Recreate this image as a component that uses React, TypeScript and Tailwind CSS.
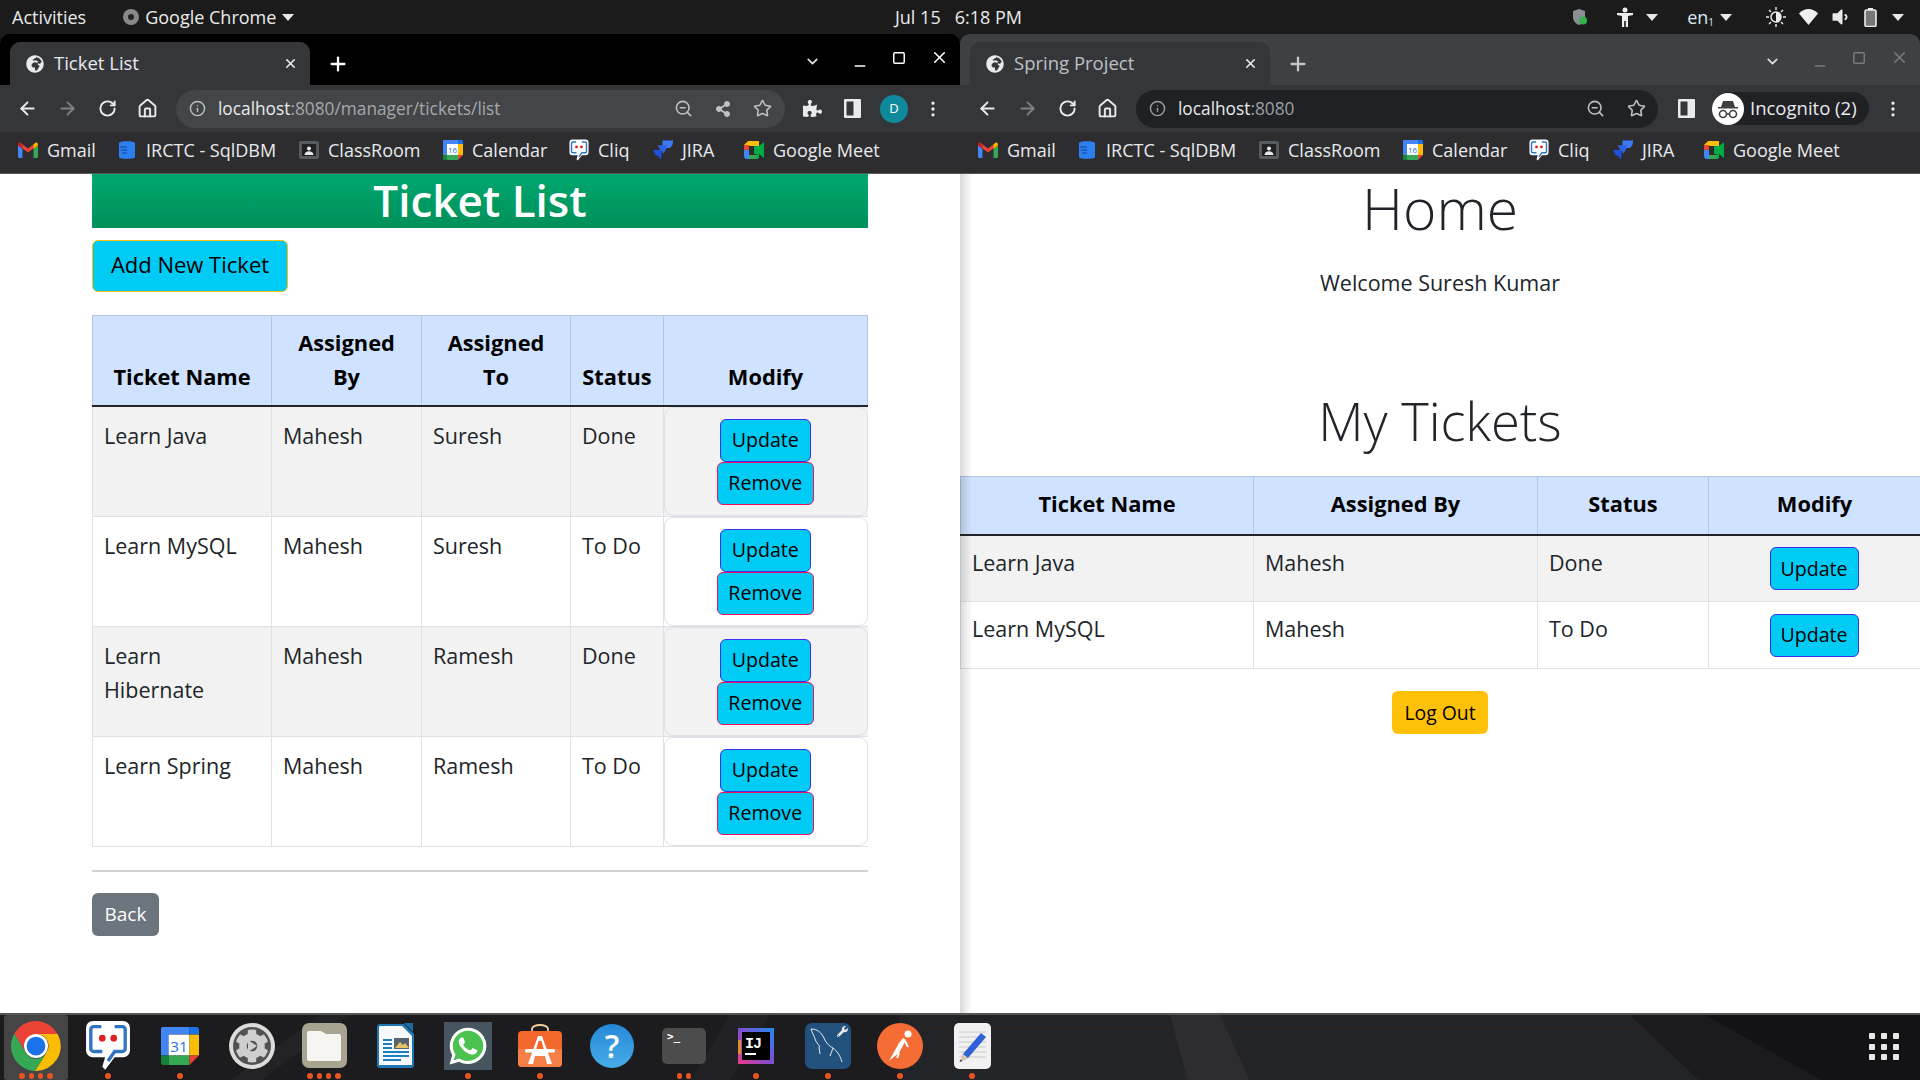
import React from "react";
import { ArrowLeft, ArrowRight, RotateCw, Home, Info, ZoomOut, Star, X, Plus, ChevronDown, Minus, Square, EllipsisVertical } from "lucide-react";
import { FaGlobeAfrica, FaWhatsapp, FaPuzzlePiece, FaShareAlt, FaCog, FaWrench, FaVolumeDown } from "react-icons/fa";

const FONT = "font-['Open_Sans','Noto_Sans',sans-serif]";

const Caret = ({ className = "" }: { className?: string }) => (
  <svg width="12" height="7" viewBox="0 0 12 7" className={className}><path d="M0 0h12L6 7z" fill="#e8e8e8" /></svg>
);

const Gmail = () => (
  <svg width="20" height="16" viewBox="0 0 20 16">
    <path d="M0 3v11.5A1.5 1.5 0 0 0 1.500 16H4.500V7z" fill="#4285f4" />
    <path d="M15.500 7v9h3a1.500 1.500 0 0 0 1.500-1.500V3z" fill="#34a853" />
    <path d="M0 3 10 10.500 20 3 18 0.500 10 6.500 2 0.500z" fill="#ea4335" />
    <path d="M0 3c0-2 1.500-3 2-2.500L4.500 2.500V7zM20 3c0-2-1.500-3-2-2.500L15.500 2.500V7z" fill="#c5221f" />
    <path d="M15.500 2.500 18 0.500C19 0.500 20 1.500 20 3L15.500 7z" fill="#fbbc04" />
  </svg>
);
const Irctc = () => (
  <svg width="18" height="20" viewBox="0 0 18 20">
    <path d="M1 3C1 .5 17 .5 17 3v14c0 2.500-16 2.500-16 0z" fill="#2b7ff0" />
    <path d="M2 7h7M3 10h6M4 13h5" stroke="#12479c" strokeWidth="1.200" />
  </svg>
);
const ClassRoom = () => (
  <svg width="20" height="18" viewBox="0 0 20 18">
    <rect width="20" height="18" rx="2" fill="#565a61" />
    <rect x="3" y="3" width="14" height="12" fill="#202124" />
    <circle cx="10" cy="7.500" r="2" fill="#e8e8e8" />
    <path d="M5.500 14c0-5 9-5 9 0z" fill="#e8e8e8" />
  </svg>
);
const CalendarIcon = ({ size = 20, text = "16" }: { size?: number; text?: string }) => (
  <svg width={size} height={size} viewBox="0 0 20 20">
    <path d="M1 0h14v4H4v11H0V1a1 1 0 0 1 1-1z" fill="#4285f4" />
    <rect x="4" y="4" width="11" height="11" fill="#fff" />
    <path d="M15 0h3.500A1.500 1.500 0 0 1 20 1.500V4h-5z" fill="#1a73e8" />
    <path d="M15 4h5v11h-5z" fill="#fbbc04" />
    <path d="M0 15h4v5H1a1 1 0 0 1-1-1z" fill="#188038" />
    <path d="M4 15h11v5H4z" fill="#34a853" />
    <path d="M15 15h5l-5 5z" fill="#ea4335" />
    <text x="9.500" y="13" textAnchor="middle" fontSize="8" fontFamily="Open Sans" fill="#1a73e8">{text}</text>
  </svg>
);
const Cliq = ({ size = 20 }: { size?: number }) => (
  <svg width={size} height={size * 1.1} viewBox="0 0 48 53">
    <path d="M8 1h32a7 7 0 0 1 7 7v24a7 7 0 0 1-7 7H31L21 52l-3-3 3-10H8a7 7 0 0 1-7-7V8a7 7 0 0 1 7-7z" fill="#fff" />
    <path d="M17 7H9a3 3 0 0 0-3 3v20a3 3 0 0 0 3 3h9M31 7h8a3 3 0 0 1 3 3v20a3 3 0 0 1-3 3h-8l-7 10" fill="none" stroke="#2f74c0" strokeWidth="3.500" />
    <circle cx="18" cy="19" r="3.500" fill="#e02020" />
    <circle cx="30" cy="19" r="3.500" fill="#e02020" />
  </svg>
);
const Jira = () => (
  <svg width="21" height="21" viewBox="0 0 21 21">
    <path d="M10 0h11v1c0 4-2 7-5 7h-2L10 12z" fill="#3d7bf5" />
    <path d="M5 5h9v4l-3 5-2-3H8z" fill="#2c62e8" />
    <path d="M0 10h9v4c0 1 0 3 0 3l-1 3-3-4H3z" fill="#1f50d8" />
  </svg>
);
const Meet = () => (
  <svg width="20" height="18" viewBox="0 0 20 18">
    <path d="M4 0h9v5H5v4H0V4z" fill="#fbbc04" />
    <path d="M0 9h5v5h8v4H3a3 3 0 0 1-3-3z" fill="#4285f4" />
    <path d="M0 4h5v5H0z" fill="#ea4335" />
    <path d="M5 14h8v4H5z" fill="#34a853" />
    <path d="M13 0a2 2 0 0 1 2 2v3l5-4v16l-5-4v3a2 2 0 0 1-2 2zM13 5h-3v8h3z" fill="#00ac47" />
    <path d="M13 0h2v5h-2z" fill="#fbbc04" />
  </svg>
);

const bookmarks: [React.ReactNode, string, string][] = [
  [<Gmail key="g" />, "Gmail", "w-[99px]"],
  [<Irctc key="i" />, "IRCTC - SqlDBM", "w-[182px]"],
  [<ClassRoom key="c" />, "ClassRoom", "w-[144px]"],
  [<CalendarIcon key="d" />, "Calendar", "w-[126px]"],
  [<Cliq key="q" />, "Cliq", "w-[84px]"],
  [<Jira key="j" />, "JIRA", "w-[91px]"],
  [<Meet key="m" />, "Google Meet", "w-[140px]"],
];

const Bookmarks = () => (
  <div className="flex h-[41px] items-center bg-[#2d2d2f] pl-[18px] pb-[5px]">
    {bookmarks.map(([icon, label, w]) => (
      <div key={label} className={`flex items-center gap-[9px] ${w}`}>
        <span className="flex w-[20px] justify-center">{icon}</span>
        <span className="text-[18px] whitespace-nowrap text-[#e8eaed]">{label}</span>
      </div>
    ))}
  </div>
);

const Tab = ({ title, active }: { title: string; active: boolean }) => (
  <div className={`flex h-[51px] items-end pl-[10px] ${active ? "bg-black" : "bg-[#3d4144]"} rounded-t-[10px]`}>
    <div className="flex h-[43px] w-[300px] items-center rounded-t-[10px] bg-[#35363a] pl-[16px] pr-[12px]">
      <FaGlobeAfrica size={18} color="#e8eaed" />
      <span className={`ml-[10px] flex-1 pb-[1px] text-[18.500px] ${active ? "text-[#e8eaed]" : "text-[#bdc1c6]"}`}>{title}</span>
      <X size={15} color="#e8eaed" strokeWidth={2.500} />
    </div>
    <div className="flex h-[43px] w-[56px] items-center justify-center">
      <Plus size={22} color={active ? "#fff" : "#c4c7c9"} strokeWidth={2.500} />
    </div>
    <div className="flex-1" />
    <div className={`flex h-[43px] items-center pb-1 pr-[11px] ${active ? "text-white" : "text-[#777b7e]"}`}>
      <ChevronDown size={17} className="mr-[31px] text-[#dadce0]" strokeWidth={2.500} />
      <Minus size={16} className="mr-[24px] mt-2" strokeWidth={2.500} />
      <Square size={14} className="mr-[24px] -mt-2" strokeWidth={2.500} />
      <X size={19} className="-mt-2" strokeWidth={2} />
    </div>
  </div>
);

const NavIcons = () => (
  <div className="flex w-[176px] shrink-0 items-center pl-[17px] text-[#e8eaed]">
    <ArrowLeft size={21} strokeWidth={2.200} />
    <ArrowRight size={21} strokeWidth={2.200} className="ml-[19px] text-[#7f8184]" />
    <RotateCw size={19} strokeWidth={2.400} className="ml-[20px]" />
    <Home size={21} strokeWidth={2.200} className="ml-[20px]" />
  </div>
);

const SidePanel = () => (
  <svg width="17" height="19" viewBox="0 0 17 19"><rect width="17" height="19" rx="1" fill="#e8eaed" /><rect x="2.500" y="2.500" width="7" height="14" fill="#35363a" /></svg>
);

const LeftToolbar = () => (
  <div className="flex h-[47px] items-center bg-[#35363a]">
    <NavIcons />
    <div className="flex h-[38px] w-[609px] items-center rounded-full bg-[#434548] pl-[13px] pr-[13px]">
      <Info size={17} color="#bdc1c6" />
      <span className="ml-[12px] flex-1 text-[17.300px] text-[#e8eaed]">localhost<span className="text-[#a5a8ac]">:8080/manager/tickets/list</span></span>
      <ZoomOut size={19} color="#bdc1c6" />
      <FaShareAlt size={16} color="#bdc1c6" className="ml-[22px]" />
      <Star size={19} color="#bdc1c6" className="ml-[22px]" />
    </div>
    <FaPuzzlePiece size={19} color="#e8eaed" className="ml-[18px]" />
    <span className="ml-[22px]"><SidePanel /></span>
    <div className="ml-[19px] flex h-[28px] w-[28px] items-center justify-center rounded-full bg-[#0e8a9c] text-[13px] text-white">D</div>
    <EllipsisVertical size={20} color="#e8eaed" className="ml-[15px]" />
  </div>
);

const RightToolbar = () => (
  <div className="flex h-[47px] items-center bg-[#35363a]">
    <NavIcons />
    <div className="flex h-[38px] w-[522px] items-center rounded-full bg-[#202124] pl-[13px] pr-[12px]">
      <Info size={17} color="#9aa0a6" />
      <span className="ml-[12px] flex-1 text-[17.300px] text-[#e8eaed]">localhost<span className="text-[#9aa0a6]">:8080</span></span>
      <ZoomOut size={19} color="#bdc1c6" />
      <Star size={19} color="#bdc1c6" className="ml-[22px]" />
    </div>
    <span className="ml-[20px]"><SidePanel /></span>
    <div className="ml-[17px] flex h-[33px] w-[157px] items-center rounded-full bg-[#202124]">
      <svg width="32" height="32" viewBox="0 0 32 32">
        <circle cx="16" cy="16" r="16" fill="#fff" />
        <path d="M11 8h10l2 6h3v1.500H6V14h3z" fill="#3c4043" />
        <circle cx="11" cy="21" r="3.500" fill="none" stroke="#3c4043" strokeWidth="1.600" />
        <circle cx="21" cy="21" r="3.500" fill="none" stroke="#3c4043" strokeWidth="1.600" />
        <path d="M14.500 21h3" stroke="#3c4043" strokeWidth="1.600" />
      </svg>
      <span className="ml-[6px] pb-[1px] text-[18.500px] text-[#e8eaed]">Incognito (2)</span>
    </div>
    <EllipsisVertical size={20} color="#e8eaed" className="ml-[14px]" />
  </div>
);

const BTN = "flex items-center justify-center rounded-[6px] bg-[#00cbf5] text-black border-[1.5px]";

const UpdateBtn = ({ w = "w-[91px]" }: { w?: string }) => (
  <div className={`${BTN} h-[43px] ${w} border-[#3b30f0] text-[19.600px]`}>Update</div>
);

const leftRows = [
  ["Learn Java", "Mahesh", "Suresh", "Done"],
  ["Learn MySQL", "Mahesh", "Suresh", "To Do"],
  ["Learn Hibernate", "Mahesh", "Ramesh", "Done"],
  ["Learn Spring", "Mahesh", "Ramesh", "To Do"],
];

const TH = "border border-b-0 border-[#b6c6e0] bg-[#cfe2ff] px-[11px] pt-[10px] pb-[12px] text-center align-bottom text-[21.800px] font-bold text-black leading-[33.600px]";
const TD = "border border-[#dee2e6] px-[11px] pt-[12px] pb-[6px] align-top text-[#212529] leading-[33.600px]";

const LeftPage = () => (
  <div className="h-[840px] bg-white px-[92px] text-[21.500px]">
    <div className="flex h-[54px] items-center justify-center bg-gradient-to-b from-[#00a76f] to-[#00905a] pb-[2px] text-[44px] font-semibold text-white leading-none">Ticket List</div>
    <div className={`${BTN} mt-[12px] h-[52px] w-[196px] border-[#ffc107] pb-[3px] text-[22px]`}>Add New Ticket</div>
    <table className="mt-[23px] w-[775px] table-fixed border-collapse">
      <colgroup>
        <col className="w-[179px]" /><col className="w-[150px]" /><col className="w-[149px]" /><col className="w-[93px]" /><col className="w-[204px]" />
      </colgroup>
      <thead>
        <tr className="border-b-[2.500px] border-b-[#212529]">
          <th className={TH}>Ticket Name</th>
          <th className={TH}>Assigned By</th>
          <th className={TH}>Assigned To</th>
          <th className={TH}>Status</th>
          <th className={TH}>Modify</th>
        </tr>
      </thead>
      <tbody>
        {leftRows.map((r, i) => (
          <tr key={r[0]} className={i % 2 === 0 ? "bg-[#f2f2f2]" : "bg-white"}>
            {r.map((c) => <td key={c} className={`${TD} h-[109px]`}>{c}</td>)}
            <td className="h-[109px] border-b border-[#dee2e6] p-0">
              <div className={`flex h-[109px] flex-col items-center justify-center rounded-[9px] border border-[#dee2e6] pr-[1px] ${i % 2 === 0 ? "bg-[#f2f2f2]" : "bg-white"}`}>
                <UpdateBtn />
                <div className={`${BTN} h-[43px] w-[97px] border-[#f0105f] text-[19.600px]`}>Remove</div>
              </div>
            </td>
          </tr>
        ))}
      </tbody>
    </table>
    <div className="mt-[23px] h-[2px] bg-[#d0d2d4]" />
    <div className="mt-[21px] flex h-[43px] w-[67px] items-center justify-center rounded-[6px] bg-[#6c757d] text-[19px] text-white">Back</div>
  </div>
);

const rightRows = [["Learn Java", "Mahesh", "Done"], ["Learn MySQL", "Mahesh", "To Do"]];

const RightPage = () => (
  <div className="relative h-[840px] bg-white text-[21.500px] text-[#212529]">
    <div className="absolute inset-y-0 left-0 w-[12px] bg-gradient-to-r from-[#00000026] to-transparent" />
    <h1 className="pt-[2px] text-center text-[57px] font-light leading-[65px]">Home</h1>
    <p className="mt-[25px] text-center leading-[34px]">Welcome Suresh Kumar</p>
    <h1 className="mt-[87px] text-center text-[52.500px] font-light leading-[67px]">My Tickets</h1>
    <table className="mt-[22px] w-[960px] table-fixed border-collapse">
      <colgroup><col className="w-[293px]" /><col className="w-[284px]" /><col className="w-[171px]" /><col className="w-[212px]" /></colgroup>
      <thead>
        <tr className="border-b-[2.500px] border-b-[#212529]">
          {["Ticket Name", "Assigned By", "Status", "Modify"].map((h) => (
            <th key={h} className="h-[58px] border border-b-0 border-[#b6c6e0] bg-[#cfe2ff] pb-[2px] text-center text-[21.800px] font-bold text-black">{h}</th>
          ))}
        </tr>
      </thead>
      <tbody>
        {rightRows.map((r, i) => (
          <tr key={r[0]} className={i === 0 ? "bg-[#f2f2f2]" : "bg-white"}>
            {r.map((c) => <td key={c} className="h-[67px] border border-[#dee2e6] px-[11px] pb-[11px] align-middle">{c}</td>)}
            <td className="h-[67px] border border-[#dee2e6]"><div className="flex justify-center pr-[1px]"><UpdateBtn w="w-[89px]" /></div></td>
          </tr>
        ))}
      </tbody>
    </table>
    <div className="mt-[22px] flex justify-center">
      <div className="flex h-[43px] w-[96px] items-center justify-center rounded-[6px] bg-[#ffc107] text-[19.400px] text-black">Log Out</div>
    </div>
  </div>
);

const Dots = ({ n }: { n: number }) => (
  <div className="flex h-[8px] items-center justify-center gap-[3.700px]">
    {Array.from({ length: n }).map((_, i) => <span key={i} className="h-[5.500px] w-[5.500px] rounded-full bg-[#e95420]" />)}
  </div>
);

const Chrome = () => (
  <svg width="50" height="50" viewBox="0 0 48 48">
    <path d="M24 0A24 24 0 0 0 3.200 12L14 30.500A11.500 11.500 0 0 1 24 13h20.800A24 24 0 0 0 24 0z" fill="#ea4335" />
    <path d="M44.800 12.500H24A11.500 11.500 0 0 1 34 30.500L23 48A24 24 0 0 0 44.800 12.500z" fill="#fbbc04" />
    <path d="M3.200 12A24 24 0 0 0 23 48L34 30.500A11.500 11.500 0 0 1 14 30.500z" fill="#34a853" />
    <circle cx="24" cy="24" r="11.500" fill="#fff" />
    <circle cx="24" cy="24" r="9" fill="#1a73e8" />
  </svg>
);
const Gear = () => (
  <div className="flex h-[46px] w-[46px] items-center justify-center rounded-full bg-[#dcdcdc]">
    <div className="relative flex h-[38px] w-[38px] items-center justify-center rounded-full bg-[#525252]">
      <FaCog size={34} color="#cfcfcf" />
      <svg width="10" height="12" viewBox="0 0 10 12" className="absolute"><path d="M1 0l9 6-9 6z" fill="#cfcfcf" /></svg>
    </div>
  </div>
);
const Files = () => (
  <div className="flex h-[45px] w-[45px] items-center justify-center rounded-[7px] bg-[#a9a391]">
    <svg width="34" height="30" viewBox="0 0 34 30"><path d="M2 0h12l5 3h13a2 2 0 0 1 2 2v23a2 2 0 0 1-2 2H2a2 2 0 0 1-2-2V2a2 2 0 0 1 2-2z" fill="#f6f5f1" /></svg>
  </div>
);
const Writer = () => (
  <svg width="38" height="46" viewBox="0 0 38 46">
    <path d="M3 1h24l10 10v31a3 3 0 0 1-3 3H3a3 3 0 0 1-3-3V4a3 3 0 0 1 3-3z" fill="#1f78b4" />
    <path d="M3 3h22l10 10v29H2V4z" fill="#f7f9fb" />
    <path d="M27 0h9v9z" fill="#1a6ea8" />
    <path d="M6 17h9M6 21h9M6 25h9M6 29h26M6 33h26M6 37h18" stroke="#1a80c0" strokeWidth="2" />
    <rect x="17" y="15" width="15" height="11" fill="#56646f" />
    <path d="M18 25l5-6 3 3 2-2 4 5z" fill="#e9c46a" />
  </svg>
);
const Whats = () => (
  <div className="flex h-[48px] w-[48px] items-center justify-center bg-[#46555f]">
    <div className="relative flex h-[36px] w-[36px] items-center justify-center rounded-full bg-[#49c24f]">
      <FaWhatsapp size={42} color="#fff" className="absolute" />
    </div>
  </div>
);
const Store = () => (
  <svg width="46" height="46" viewBox="0 0 46 46">
    <path d="M15 10V6a8 4 0 0 1 16 0v4" fill="none" stroke="#f0d0a0" strokeWidth="1.800" />
    <rect x="1" y="8" width="44" height="36" rx="4" fill="#f2672b" />
    <path d="M1 26h44v14a4 4 0 0 1-4 4H5a4 4 0 0 1-4-4z" fill="#f48048" />
    <path d="M21 13h4l10 28h-5l-2-8H18l-2 8h-5z" fill="#fff" />
    <path d="M21.500 18h3L27 27h-8z" fill="#f2672b" />
    <rect x="8" y="26" width="30" height="3.500" rx="1.500" fill="#fff" />
  </svg>
);
const Help = () => (
  <div className="flex h-[44px] w-[44px] items-center justify-center rounded-full bg-gradient-to-b from-[#2589d8] to-[#46ace8] text-[32px] font-semibold text-white leading-none">?</div>
);
const Terminal = () => (
  <div className="h-[36px] w-[44px] rounded-[5px] bg-[#4c4c4c] pl-[5px] pt-[2px] font-['DejaVu_Sans_Mono',monospace] text-[11px] font-bold leading-[14px] text-white">&gt;_</div>
);
const Idea = () => (
  <svg width="36" height="36" viewBox="0 0 36 36">
    <defs><linearGradient id="ij" x1="0" y1="1" x2="1" y2="0"><stop offset="0" stopColor="#ee3a8c" /><stop offset="0.5" stopColor="#7b4fd0" /><stop offset="1" stopColor="#1f8cf0" /></linearGradient></defs>
    <rect width="36" height="36" fill="url(#ij)" />
    <path d="M0 12h3v14H0z" fill="#d9902f" />
    <rect x="4" y="4" width="28" height="28" fill="#000" />
    <text x="7" y="20" fontSize="15" fontWeight="700" fontFamily="Liberation Mono" letterSpacing="-1" fill="#fff">IJ</text>
    <rect x="7" y="25" width="11" height="2" fill="#fff" />
  </svg>
);
const MySql = () => (
  <div className="relative h-[46px] w-[46px] rounded-[7px] bg-[#22517e]">
    <svg width="46" height="46" viewBox="0 0 46 46" className="absolute inset-0">
      <path d="M6 6c6 0 10 3 13 9 2 5 5 8 9 10 4 3 7 7 9 14M6 6c1 4 3 6 4 10 1 3 3 5 5 8M14 24l1 7M28 25l-3 8" fill="none" stroke="#e4edf3" strokeWidth="1" />
    </svg>
    <FaWrench size={11} color="#e8e8e8" className="absolute right-[3px] top-[3px]" />
  </div>
);
const Postman = () => (
  <div className="flex h-[46px] w-[46px] items-center justify-center rounded-full bg-[#f56c34]">
    <svg width="32" height="34" viewBox="0 0 32 34">
      <circle cx="24" cy="5" r="3.500" fill="#fff" />
      <path d="M19 9l3 2-7 13-4 3-6 5 5-9 5-9z" fill="#fff" />
      <path d="M15 24l-2 5M21 12l3 6" stroke="#fff" strokeWidth="2" />
    </svg>
  </div>
);
const Editor = () => (
  <div className="relative h-[46px] w-[37px] rounded-[5px] bg-[#f1f1f1]">
    <svg width="37" height="46" viewBox="0 0 37 46" className="absolute inset-0">
      <path d="M5 9h27M5 14h27M5 19h27M5 24h27M5 29h27M5 34h27" stroke="#c9c9c9" strokeWidth="1" />
      <path d="M27 10l5 4-18 21-7 3 2-7z" fill="#2f62d8" />
      <path d="M9 31l5 4-7 3z" fill="#e6c79e" />
      <path d="M6.500 36.500l2 1.500-3 1z" fill="#333" />
    </svg>
  </div>
);

const dock: [React.ReactNode, number][] = [
  [<Chrome key="a" />, 4], [<Cliq key="b" size={46} />, 1], [<CalendarIcon key="c" size={38} text="31" />, 1], [<Gear key="d" />, 0],
  [<Files key="e" />, 4], [<Writer key="f" />, 0], [<Whats key="g" />, 1], [<Store key="h" />, 1], [<Help key="i" />, 0],
  [<Terminal key="j" />, 2], [<Idea key="k" />, 1], [<MySql key="l" />, 1], [<Postman key="m" />, 1], [<Editor key="n" />, 1],
];

const Dock = () => (
  <div className="relative flex h-[67px] border-t-[2px] border-t-[#555] bg-[#232427]">
    <svg className="absolute inset-0" width="1920" height="66" viewBox="0 0 1920 66">
      <rect x="0" y="0" width="900" height="66" fill="#1c1c1f" />
      <rect x="900" y="12" width="800" height="2" fill="#2b2222" />
      <path d="M1170 0h50l30 66h-62z" fill="#2d2d2f" />
      <path d="M1630 0h75l120 66h-125z" fill="#1b1b1d" />
      <path d="M1705 0h215v66h-97z" fill="#131315" />
      <path d="M230 66l90-66h30l-90 66z" fill="#232326" />
      <path d="M690 66l40-66h40l-40 66z" fill="#222225" />
    </svg>
    <div className="relative flex">
      {dock.map(([icon, n], i) => (
        <div key={i} className="relative flex h-[65px] w-[72px] flex-col items-center">
          {i === 0 && <div className="absolute inset-x-[4px] inset-y-0 rounded-[3px] bg-[#454545]" />}
          <div className="relative flex h-[58px] items-center justify-center pt-[4px]">{icon}</div>
          <div className="relative"><Dots n={n} /></div>
        </div>
      ))}
    </div>
    <div className="flex-1" />
    <div className="relative mr-[21px] mt-[18px] grid h-[30px] grid-cols-3 gap-x-[6px] gap-y-[2px]">
      {Array.from({ length: 9 }).map((_, i) => <span key={i} className="h-[6px] w-[6px] rounded-[1px] bg-[#e8e8e8]" />)}
    </div>
  </div>
);

const TopBar = () => (
  <div className="flex h-[34px] items-center bg-[#1b1b1b] text-[18px] text-[#ebebeb]">
    <div className="flex w-[895px] items-center pl-[12px]">
      <span>Activities</span>
      <svg width="16" height="16" viewBox="0 0 16 16" className="ml-[37px]"><circle cx="8" cy="8" r="8" fill="#888" /><circle cx="8" cy="8" r="3" fill="#222" /></svg>
      <span className="ml-[6px]">Google Chrome</span>
      <Caret className="ml-[6px]" />
    </div>
    <span>Jul 15</span>
    <span className="ml-[14px]">6:18 PM</span>
    <div className="flex-1" />
    <div className="flex items-center pr-[16px]">
      <svg width="14" height="17" viewBox="0 0 14 17"><path d="M6 0l6 2v6c0 4-3 7-6 8-3-1-6-4-6-8V2z" fill="#8b8f93" /><circle cx="10" cy="11.500" r="4" fill="#35b34a" /></svg>
      <svg width="18" height="20" viewBox="0 0 18 20" className="ml-[29px]"><circle cx="9" cy="3" r="2.500" fill="#ededed" /><path d="M1 6h16v2l-5 1v11H9.800v-6H8.200v6H6V9L1 8z" fill="#ededed" /></svg>
      <Caret className="ml-[12px]" />
      <span className="ml-[29px] text-[#dbe7f5]">en<sub className="text-[10px]">1</sub></span>
      <Caret className="ml-[6px]" />
      <svg width="20" height="20" viewBox="0 0 20 20" className="ml-[34px]"><circle cx="10" cy="10" r="5" fill="none" stroke="#ededed" strokeWidth="1.500" /><path d="M10 5a5 5 0 0 1 0 10z" fill="#ededed" /><path d="M10 0v3M10 17v3M0 10h3M17 10h3M3 3l2 2M15 15l2 2M17 3l-2 2M5 15l-2 2" stroke="#ededed" strokeWidth="1.400" /></svg>
      <svg width="19" height="16" viewBox="0 0 19 16" className="ml-[13px]"><path d="M0 4.500C5-1.500 14-1.500 19 4.500L9.500 16z" fill="#f0f0f0" /></svg>
      <FaVolumeDown size={20} color="#e8e8e8" className="ml-[12px]" />
      <svg width="13" height="19" viewBox="0 0 13 19" className="ml-[14px]"><rect x="4" y="0" width="5" height="2" fill="#ededed" /><rect x="1" y="2" width="11" height="16.500" rx="1.500" fill="#777" stroke="#ededed" strokeWidth="1.600" /></svg>
      <Caret className="ml-[15px]" />
    </div>
  </div>
);

export default function App() {
  return (
    <div className={`flex h-screen w-[1920px] flex-col overflow-hidden bg-[#1b1b1b] ${FONT}`}>
      <TopBar />
      <div className="flex h-[979px] shrink-0">
        <div className="w-[960px]">
          <Tab title="Ticket List" active />
          <LeftToolbar />
          <Bookmarks />
          <div className="h-px bg-[#555]" />
          <LeftPage />
        </div>
        <div className="w-[960px]">
          <Tab title="Spring Project" active={false} />
          <RightToolbar />
          <Bookmarks />
          <div className="h-px bg-[#555]" />
          <RightPage />
        </div>
      </div>
      <Dock />
    </div>
  );
}
